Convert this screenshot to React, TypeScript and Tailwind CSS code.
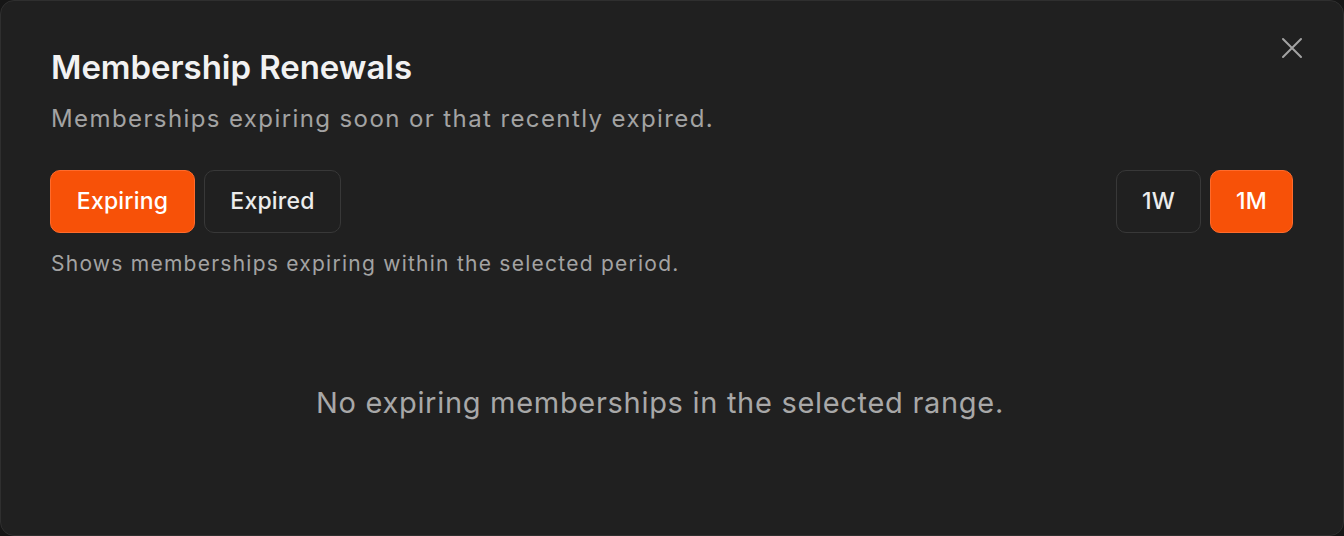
import React, { useState } from "react"

const font = { fontFamily: "Inter, 'Noto Sans', sans-serif" }

function ToggleButton({ label, active, onClick, className = "" }: { label: string; active: boolean; onClick: () => void; className?: string }) {
  return (
    <button
      onClick={onClick}
      className={
        "h-[63px] rounded-[10px] border text-[23px] leading-none font-medium tracking-[0.2px] " +
        (active
          ? "bg-[#f75108] border-[#ff6b2c] text-white"
          : "bg-[#202020] border-[#383838] text-[#ececec]") +
        " " +
        className
      }
    >
      {label}
    </button>
  )
}

export default function App() {
  const [mode, setMode] = useState<"expiring" | "expired">("expiring")
  const [range, setRange] = useState<"1W" | "1M">("1M")

  return (
    <div className="w-[1344px] h-[536px] bg-[#161616]" style={font}>
      <div className="relative h-full rounded-[14px] border border-[#2f2f2f] bg-[#202020] pl-[49px] pr-[50px] pt-[46px] flex flex-col">
        <button className="absolute right-[39px] top-[35px] text-[#a3a3a3]" aria-label="Close">
          <svg width="24" height="24" viewBox="0 0 24 24" fill="none" stroke="currentColor" strokeWidth="2" strokeLinecap="round">
            <path d="M3 3 L21 21 M21 3 L3 21" />
          </svg>
        </button>

        <h2 className="pl-[1px] text-[33px] leading-[40px] font-semibold text-[#f2f2f2] tracking-[-0.05px]">Membership Renewals</h2>
        <p className="pl-[1px] mt-[16px] text-[24px] leading-[32px] text-[#a3a3a3] tracking-[1.4px]">Memberships expiring soon or that recently expired.</p>

        <div className="mt-[35px] flex items-center justify-between">
          <div className="flex gap-[9px]">
            <ToggleButton label="Expiring" active={mode === "expiring"} onClick={() => setMode("expiring")} className="w-[145px]" />
            <ToggleButton label="Expired" active={mode === "expired"} onClick={() => setMode("expired")} className="w-[137px]" />
          </div>
          <div className="flex gap-[9px]">
            <ToggleButton label="1W" active={range === "1W"} onClick={() => setRange("1W")} className="w-[85px]" />
            <ToggleButton label="1M" active={range === "1M"} onClick={() => setRange("1M")} className="w-[83px]" />
          </div>
        </div>

        <p className="pl-[1px] mt-[17px] text-[21px] leading-[28px] text-[#a3a3a3] tracking-[1.25px]">
          Shows memberships {mode === "expiring" ? "expiring" : "that expired"} within the selected period.
        </p>

        <div className="flex-1 flex items-center justify-center pb-[7px] pr-[23px]">
          <p className="text-[29px] leading-[40px] text-[#a8a8a8] tracking-[0.7px]">
            No {mode} memberships in the selected range.
          </p>
        </div>
      </div>
    </div>
  )
}
